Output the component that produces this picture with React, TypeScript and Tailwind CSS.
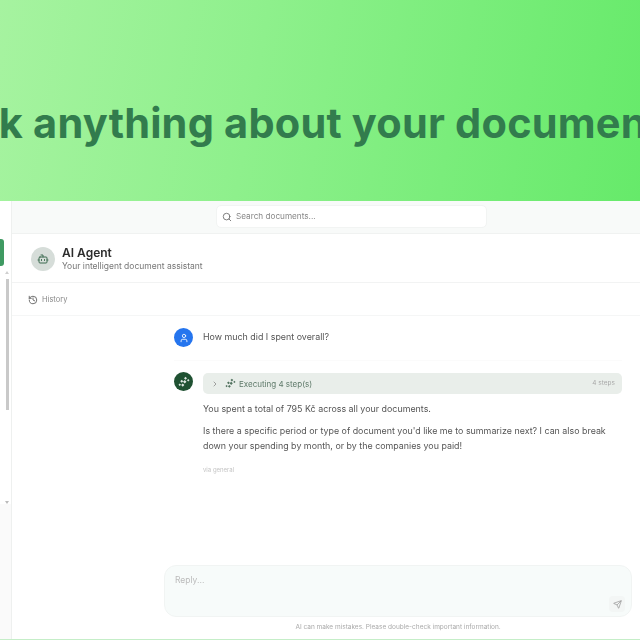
import { Search, Bot, History, User, ChevronRight, Send } from "lucide-react";

function Cluster({ className }: { className: string }) {
  return (
    <svg viewBox="0 0 24 24" className={className} fill="currentColor">
      <path d="M15 1.500l3 3-3 3-3-3zM20.500 6l2.500 2.500-2.500 2.500L18 8.500zM13.500 8l3.500 3.500-3.500 3.500-3.500-3.500zM7.500 7.500L10.500 10.500 7.500 13.500 4.500 10.500zM9.500 15l3.200 3.200-3.200 3.200-3.200-3.200zM3.500 15l2.500 2.500L3.500 20 1 17.500z" />
    </svg>
  );
}

export default function App() {
  return (
    <div className="w-[640px] h-[640px] overflow-hidden bg-white flex flex-col font-['Inter',sans-serif]">
      <div className="relative h-[201px] shrink-0 overflow-hidden bg-[linear-gradient(100deg,#a6f3a0_0%,#8ef08c_40%,#66ea6a_100%)] flex justify-center pr-[10px]">
        <h1 className="whitespace-nowrap pt-[98px] text-[41.5px] leading-[50px] font-bold text-[#327c4d] tracking-[0.2px]">
          Ask anything about your documents
        </h1>
      </div>
      <div className="flex-1 flex min-h-0 border-b border-[#c5eec8] blur-[0.5px]">
        <aside className="w-[12px] shrink-0 border-r border-[#eef0ef] flex flex-col">
          <div className="h-[38px] shrink-0" />
          <div className="w-[4px] h-[27px] shrink-0 bg-[#3f9a62] rounded-r-[3px]" />
          <div className="mt-[5px] h-[233px] shrink-0 flex flex-col items-center w-[11px]">
            <div className="ml-[3px] w-0 h-0 border-x-[2px] border-x-transparent border-b-[3px] border-b-[#cfcfcf]" />
            <div className="w-[3px] ml-[3px] mt-[5px] h-[131px] bg-[#c9c9c9]" />
            <div className="ml-[3px] mt-auto w-0 h-0 border-x-[2px] border-x-transparent border-t-[3px] border-t-[#bbb]" />
          </div>
          <div className="w-[11px] bg-[#fafafa] flex-1" />
        </aside>
        <main className="flex-1 min-w-0 flex flex-col">
          <div className="h-[33px] shrink-0 bg-[#f8faf9] border-b border-[#f0f2f1] flex pl-[204px]">
            <div className="mt-[4px] h-[23px] w-[271px] bg-white rounded-[5px] border border-[#f2f4f3] flex items-center pl-[5px] gap-[4px]">
              <Search className="w-[10px] h-[10px] text-[#666]" />
              <span className="text-[8.2px] text-[#888]">Search documents...</span>
            </div>
          </div>
          <div className="h-[49px] shrink-0 border-b border-[#f2f3f3] flex items-center pl-[19px] gap-[7px] pt-[1px]">
            <div className="w-[24px] h-[24px] rounded-full bg-[#d6ddd9] flex items-center justify-center">
              <Bot className="w-[12px] h-[12px] text-[#3c6b50]" />
            </div>
            <div className="flex flex-col">
              <span className="text-[12px] leading-[15px] font-semibold text-[#2c2c2c]">AI Agent</span>
              <span className="text-[8.5px] leading-[12px] text-[#777]">Your intelligent document assistant</span>
            </div>
          </div>
          <div className="h-[33px] shrink-0 border-b border-[#f5f6f6] flex items-center pl-[16px] gap-[4px] pt-[1px]">
            <History className="w-[10px] h-[10px] text-[#555]" />
            <span className="text-[7.5px] text-[#888]">History</span>
          </div>
          <div className="flex-1 min-h-0 flex flex-col items-start pl-[162px] pr-[18px]">
            <div className="w-full pt-[12px] h-[45px] border-b border-[#fbfbfb] flex gap-[10px]">
              <div className="w-[19px] h-[19px] rounded-full bg-[#2575ee] flex items-center justify-center">
                <User className="w-[10px] h-[10px] text-white" />
              </div>
              <span className="text-[8.9px] leading-[17px] text-[#555]">How much did I spent overall?</span>
            </div>
            <div className="w-full pt-[11px] flex gap-[10px]">
              <div className="w-[19px] h-[19px] shrink-0 rounded-full bg-[#1f5132] flex items-center justify-center">
                <Cluster className="w-[12px] h-[12px] text-[#dfe8e2]" />
              </div>
              <div className="flex-1 min-w-0">
                <div className="h-[21px] mt-[1px] rounded-[5px] bg-[#e9eeea] flex items-center pl-[8px] pr-[7px]">
                  <ChevronRight className="w-[8px] h-[8px] text-[#777]" />
                  <Cluster className="ml-[6px] w-[11px] h-[11px] text-[#52725f]" />
                  <span className="ml-[3px] text-[8px] text-[#5f7a6a]">Executing 4 step(s)</span>
                  <span className="ml-auto text-[6.5px] text-[#aaa]">4 steps</span>
                </div>
                <p className="mt-[8px] text-[8.9px] leading-[14px] text-[#555]">You spent a total of 795 Kč across all your documents.</p>
                <p className="mt-[7px] text-[8.9px] leading-[15px] text-[#555]">
                  Is there a specific period or type of document you'd like me to summarize next? I can also break down your spending by month, or by the companies you paid!
                </p>
                <p className="mt-[12px] text-[6px] leading-[9px] text-[#c4c4c4]">via general</p>
              </div>
            </div>
          </div>
          <div className="shrink-0 pl-[152px] pr-[8px]">
            <div className="h-[52px] rounded-[12px] bg-[#f7fbfa] border border-[#f1f4f3] flex flex-col px-[10px] pt-[8px]">
              <span className="text-[8.5px] text-[#bbb]">Reply...</span>
              <div className="mt-auto mb-[4px] -mr-[4px] self-end w-[16px] h-[16px] rounded-[4px] bg-[#f3f6f5] flex items-center justify-center">
                <Send className="w-[9px] h-[9px] text-[#999]" />
              </div>
            </div>
            <p className="h-[22px] flex items-center justify-center text-[6.5px] text-[#aaa]">AI can make mistakes. Please double-check important information.</p>
          </div>
        </main>
      </div>
    </div>
  );
}
